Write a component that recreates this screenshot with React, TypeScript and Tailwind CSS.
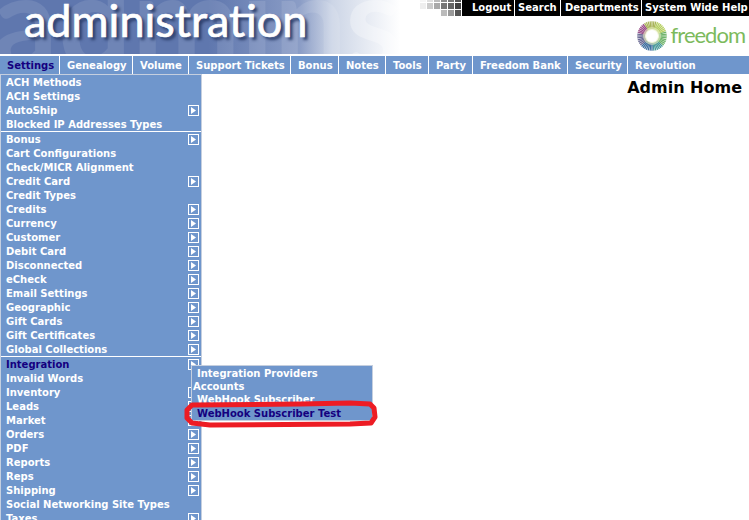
import React from 'react';

const font = { fontFamily: '"DejaVu Sans", Verdana, sans-serif' };
const lato = { fontFamily: 'Lato, sans-serif' };

const tabs = [
  { label: 'Settings', w: 'w-[60px]', active: true },
  { label: 'Genealogy', w: 'w-[73px]' },
  { label: 'Volume', w: 'w-[56px]' },
  { label: 'Support Tickets', w: 'w-[102px]' },
  { label: 'Bonus', w: 'w-[48px]' },
  { label: 'Notes', w: 'w-[47px]' },
  { label: 'Tools', w: 'w-[43px]' },
  { label: 'Party', w: 'w-[44px]' },
  { label: 'Freedom Bank', w: 'w-[95px]' },
  { label: 'Security', w: 'w-[60px]' },
  { label: 'Revolution', w: 'w-[81px]' },
];

const groups = [
  [
    { label: 'ACH Methods' },
    { label: 'ACH Settings' },
    { label: 'AutoShip', arrow: true },
    { label: 'Blocked IP Addresses Types' },
  ],
  [
    { label: 'Bonus', arrow: true },
    { label: 'Cart Configurations' },
    { label: 'Check/MICR Alignment' },
    { label: 'Credit Card', arrow: true },
    { label: 'Credit Types' },
    { label: 'Credits', arrow: true },
    { label: 'Currency', arrow: true },
    { label: 'Customer', arrow: true },
    { label: 'Debit Card', arrow: true },
    { label: 'Disconnected', arrow: true },
    { label: 'eCheck', arrow: true },
    { label: 'Email Settings', arrow: true },
    { label: 'Geographic', arrow: true },
    { label: 'Gift Cards', arrow: true },
    { label: 'Gift Certificates', arrow: true },
    { label: 'Global Collections', arrow: true },
  ],
  [
    { label: 'Integration', arrow: true, active: true },
    { label: 'Invalid Words' },
    { label: 'Inventory', arrow: true },
    { label: 'Leads', arrow: true },
    { label: 'Market', arrow: true },
    { label: 'Orders', arrow: true },
    { label: 'PDF', arrow: true },
    { label: 'Reports', arrow: true },
    { label: 'Reps', arrow: true },
    { label: 'Shipping', arrow: true },
    { label: 'Social Networking Site Types' },
    { label: 'Taxes', arrow: true },
  ],
];

const topLinks = [
  { label: 'Logout', w: 'w-[53px]', pad: 'pl-[10px]' },
  { label: 'Search', w: 'w-[46px]', pad: 'pl-[3px]' },
  { label: 'Departments', w: 'w-[81px]', pad: 'pl-[4px]' },
  { label: 'System Wide Help', w: 'w-[107px]', pad: 'pl-[3px]' },
];

function Arrow() {
  return (
    <svg width="11" height="11" viewBox="0 0 11 11" className="shrink-0">
      <rect x="0.5" y="0.5" width="10" height="10" fill="#6f96cc" stroke="#ffffff" />
      <path d="M3 2 L8 5.5 L3 9 Z" fill="#ffffff" />
    </svg>
  );
}

function Checker() {
  const rows = [
    { y: 0, h: 2, shades: ['#f6f6f6', '#e0e0e0', '#bdbdbd', '#8a8a8a', '#777777', '#555555'] },
    { y: 3, h: 6, shades: ['#eeeeee', '#cccccc', '#aaaaaa', '#777777', '#666666', '#444444'] },
    { y: 10, h: 6, shades: ['#ffffff', '#ffffff', '#ffffff', '#bbbbbb', '#999999', '#555555'] },
  ];
  return (
    <svg width="44" height="16" viewBox="0 0 44 16">
      {rows.map((r) =>
        r.shades.map((s, i) => <rect key={r.y + '-' + i} x={2 + i * 7} y={r.y} width="6" height={r.h} fill={s} />)
      )}
    </svg>
  );
}

function Sunburst() {
  const spokes = [];
  for (let i = 0; i < 48; i++) {
    const a = (i / 48) * Math.PI * 2;
    const deg = (i / 48) * 360;
    let color = '#6fb36a';
    if (deg >= 40 && deg < 85) color = '#4a9a9a';
    else if (deg >= 85 && deg < 140) color = '#3f6f9f';
    else if (deg >= 140 && deg < 190) color = '#6a6a94';
    else if (deg >= 190 && deg < 235) color = '#9a4f8a';
    else if (deg >= 235 && deg < 290) color = '#a9b45a';
    else if (deg >= 290 && deg < 340) color = '#b7cf62';
    spokes.push(
      <line
        key={i}
        x1={15 + Math.cos(a) * 7}
        y1={15 + Math.sin(a) * 7}
        x2={15 + Math.cos(a) * 14.8}
        y2={15 + Math.sin(a) * 14.8}
        stroke={color}
        strokeWidth="1.3"
      />
    );
  }
  return (
    <svg width="30" height="30" viewBox="0 0 30 30" className="shrink-0">
      {spokes}
      <circle cx="15" cy="15" r="9" fill="#e8efc0" opacity="0.6" />
      <circle cx="15" cy="15" r="6" fill="#ffffff" />
    </svg>
  );
}

export default function App() {
  return (
    <div className="relative w-[749px] h-[520px] overflow-hidden bg-white text-[10px] font-bold leading-[14px]" style={font}>
      <header className="flex h-[54px]">
        <div className="relative w-[400px] h-[54px] overflow-hidden bg-[linear-gradient(90deg,#5f77ae_0%,#5f77ae_52%,#8b9dc6_75%,#ccd5e6_83%,#ffffff_100%)]">
          <span className="absolute left-[-8px] top-[-62px] text-[130px] leading-[160px] font-bold text-white/10" style={lato}>
            admin
          </span>
          <span className="absolute left-[345px] top-[-62px] text-[130px] leading-[160px] font-bold text-white/30" style={lato}>
            s
          </span>
          <span
            className="absolute left-[24px] top-[-7px] text-[45px] leading-[54px] font-normal text-white [-webkit-text-stroke:0.7px_white] [text-shadow:3px_3px_3px_#2c3e6b]"
            style={lato}
          >
            administration
          </span>
        </div>
        <div className="flex-1 flex flex-col">
          <div className="flex justify-end h-[16px]">
            <Checker />
            <nav className="flex bg-black text-white w-[287px] shrink-0">
              {topLinks.map((l) => (
                <span key={l.label} className={`${l.w} ${l.pad} shrink-0 border-r border-white last:border-r-0 leading-[15px] whitespace-nowrap`}>
                  {l.label}
                </span>
              ))}
            </nav>
          </div>
          <div className="flex justify-end items-start gap-[4px] pr-[4px] pt-[5px]">
            <Sunburst />
            <span className="text-[22px] leading-[28px] font-normal text-[#7cba5c] tracking-[-1px]" style={lato}>
              freedom
            </span>
          </div>
        </div>
      </header>

      <nav className="flex h-[18px] mt-[2px] bg-[#6f96cc] text-white">
        {tabs.map((t) => (
          <span
            key={t.label}
            className={`${t.w} shrink-0 border-r border-white last:border-r-0 pl-[7px] leading-[20px] whitespace-nowrap ${t.active ? 'text-[#14007f]' : ''}`}
          >
            {t.label}
          </span>
        ))}
      </nav>

      <div className="flex">
        <aside className="w-[202px] shrink-0 border-l border-r border-t border-[#c5cfdf] bg-[#6f96cc] text-white">
          {groups.map((g, i) => (
            <div key={i} className="border-b border-white last:border-b-0">
              {g.map((item) => (
                <div key={item.label} className={`flex items-center justify-between h-[14px] pl-[5px] pr-[2px] ${'active' in item && item.active ? 'text-[#14007f]' : ''}`}>
                  <span className="mt-[2px]">{item.label}</span>
                  {'arrow' in item && item.arrow ? <Arrow /> : null}
                </div>
              ))}
            </div>
          ))}
        </aside>
        <main className="flex-1 text-right pr-[7px] pt-[3px]">
          <h1 className="text-[16px] leading-[22px] font-bold text-black">Admin Home</h1>
        </main>
      </div>

      {/* flyout submenu for Integration */}
      <div className="absolute left-[191px] top-[365px] w-[182px] h-[56px] border border-[#c5cfdf] bg-[#6f96cc] text-white overflow-hidden">
        <div className="pl-[5px] pt-[1px] h-[14px]">Integration Providers</div>
        <div className="pl-[1px] pt-[1px] h-[13px] mt-[-1px] leading-[13px]">Accounts</div>
        <div className="pl-[5px] pt-[1px] h-[14px]">WebHook Subscriber</div>
        <div className="pl-[5px] pt-[1px] h-[14px] text-[#14007f]">WebHook Subscriber Test</div>
      </div>

      {/* red annotation drawn on top of the screenshot */}
      <svg className="absolute left-[180px] top-[395px]" width="200" height="36" viewBox="0 0 200 36" fill="none">
        <path
          d="M12 10 L120 9 L170 8 L190 9 L194 13 L195 22 L191 28 L170 29 L30 30 L12 28 L7 23 L7 15 Z"
          stroke="#ed1c24"
          strokeWidth="5"
          strokeLinejoin="round"
        />
      </svg>
    </div>
  );
}
